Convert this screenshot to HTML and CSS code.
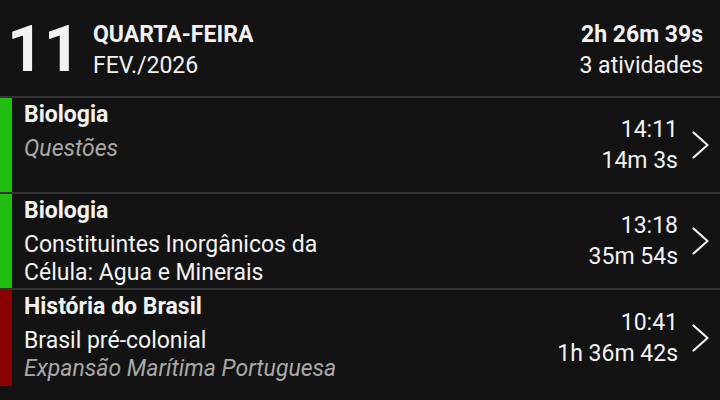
FILE: index.html
```html
<!DOCTYPE html>
<html lang="pt">
<head>
<meta charset="utf-8">
<link rel="stylesheet" href="styles.css">
</head>
<body>
<div class="screen">
  <header class="day">
    <div class="daynum">11</div>
    <div class="dayinfo">
      <div class="weekday">QUARTA-FEIRA</div>
      <div class="month">FEV./2026</div>
    </div>
    <div class="summary">
      <div class="total">2h 26m 39s</div>
      <div class="count">3 atividades</div>
    </div>
  </header>

  <div class="row">
    <div class="bar green"></div>
    <div class="body">
      <div class="title">Biologia</div>
      <div class="note">Questões</div>
    </div>
    <div class="times">
      <div>14:11</div>
      <div>14m 3s</div>
    </div>
    <svg class="chev" width="17" height="28" viewBox="0 0 17 28"><polyline points="1.5,1.5 15.5,14 1.5,26.5" fill="none" stroke="#f2f2f2" stroke-width="2.2" stroke-linecap="round" stroke-linejoin="round"/></svg>
  </div>

  <div class="row">
    <div class="bar green"></div>
    <div class="body">
      <div class="title">Biologia</div>
      <div class="text">Constituintes Inorgânicos da Célula: Agua e Minerais</div>
    </div>
    <div class="times">
      <div>13:18</div>
      <div>35m 54s</div>
    </div>
    <svg class="chev" width="17" height="28" viewBox="0 0 17 28"><polyline points="1.5,1.5 15.5,14 1.5,26.5" fill="none" stroke="#f2f2f2" stroke-width="2.2" stroke-linecap="round" stroke-linejoin="round"/></svg>
  </div>

  <div class="row last">
    <div class="bar red"></div>
    <div class="body">
      <div class="title">História do Brasil</div>
      <div class="text">Brasil pré-colonial</div>
      <div class="note">Expansão Marítima Portuguesa</div>
    </div>
    <div class="times">
      <div>10:41</div>
      <div>1h 36m 42s</div>
    </div>
    <svg class="chev" width="17" height="28" viewBox="0 0 17 28"><polyline points="1.5,1.5 15.5,14 1.5,26.5" fill="none" stroke="#f2f2f2" stroke-width="2.2" stroke-linecap="round" stroke-linejoin="round"/></svg>
  </div>
</div>
</body>
</html>
```

FILE: styles.css
```css
* { box-sizing: border-box; }
html, body {
  margin: 0;
  padding: 0;
  background: #131313;
}
body {
  font-family: Roboto, "Noto Sans", "Liberation Sans", sans-serif;
  color: #f2f2f2;
  font-size: 23px;
  width: 720px;
  height: 400px;
  overflow: hidden;
}
.screen {
  display: flex;
  flex-direction: column;
}
.day {
  display: flex;
  align-items: center;
  height: 96px;
  padding: 4px 17px 0 7px;
}
.daynum {
  font-size: 64px;
  font-weight: 700;
  line-height: 64px;
  width: 86px;
}
.dayinfo {
  flex: 1;
  line-height: 31px;
}
.weekday { font-weight: 700; }
.summary {
  text-align: right;
  line-height: 31px;
}
.total { font-weight: 700; }

.row {
  display: flex;
  align-items: center;
  border-top: 2px solid #333333;
  min-height: 96px;
}
.row.last { min-height: 98px; }
.bar {
  align-self: stretch;
  width: 12px;
  flex: 0 0 12px;
}
.green { background: #1fbf0f; }
.red { background: #8a0000; }
.body {
  align-self: flex-start;
  width: 336px;
  padding: 3px 0 0 12px;
  line-height: 28px;
  flex: 0 0 auto;
}
.title {
  font-weight: 700;
  margin-bottom: 6px;
}
.note {
  font-style: italic;
  color: #a9a9a9;
}
.times {
  flex: 1;
  text-align: right;
  line-height: 31px;
  margin-right: 14px;
}
.chev {
  flex: 0 0 17px;
  margin-right: 11px;
}
```
